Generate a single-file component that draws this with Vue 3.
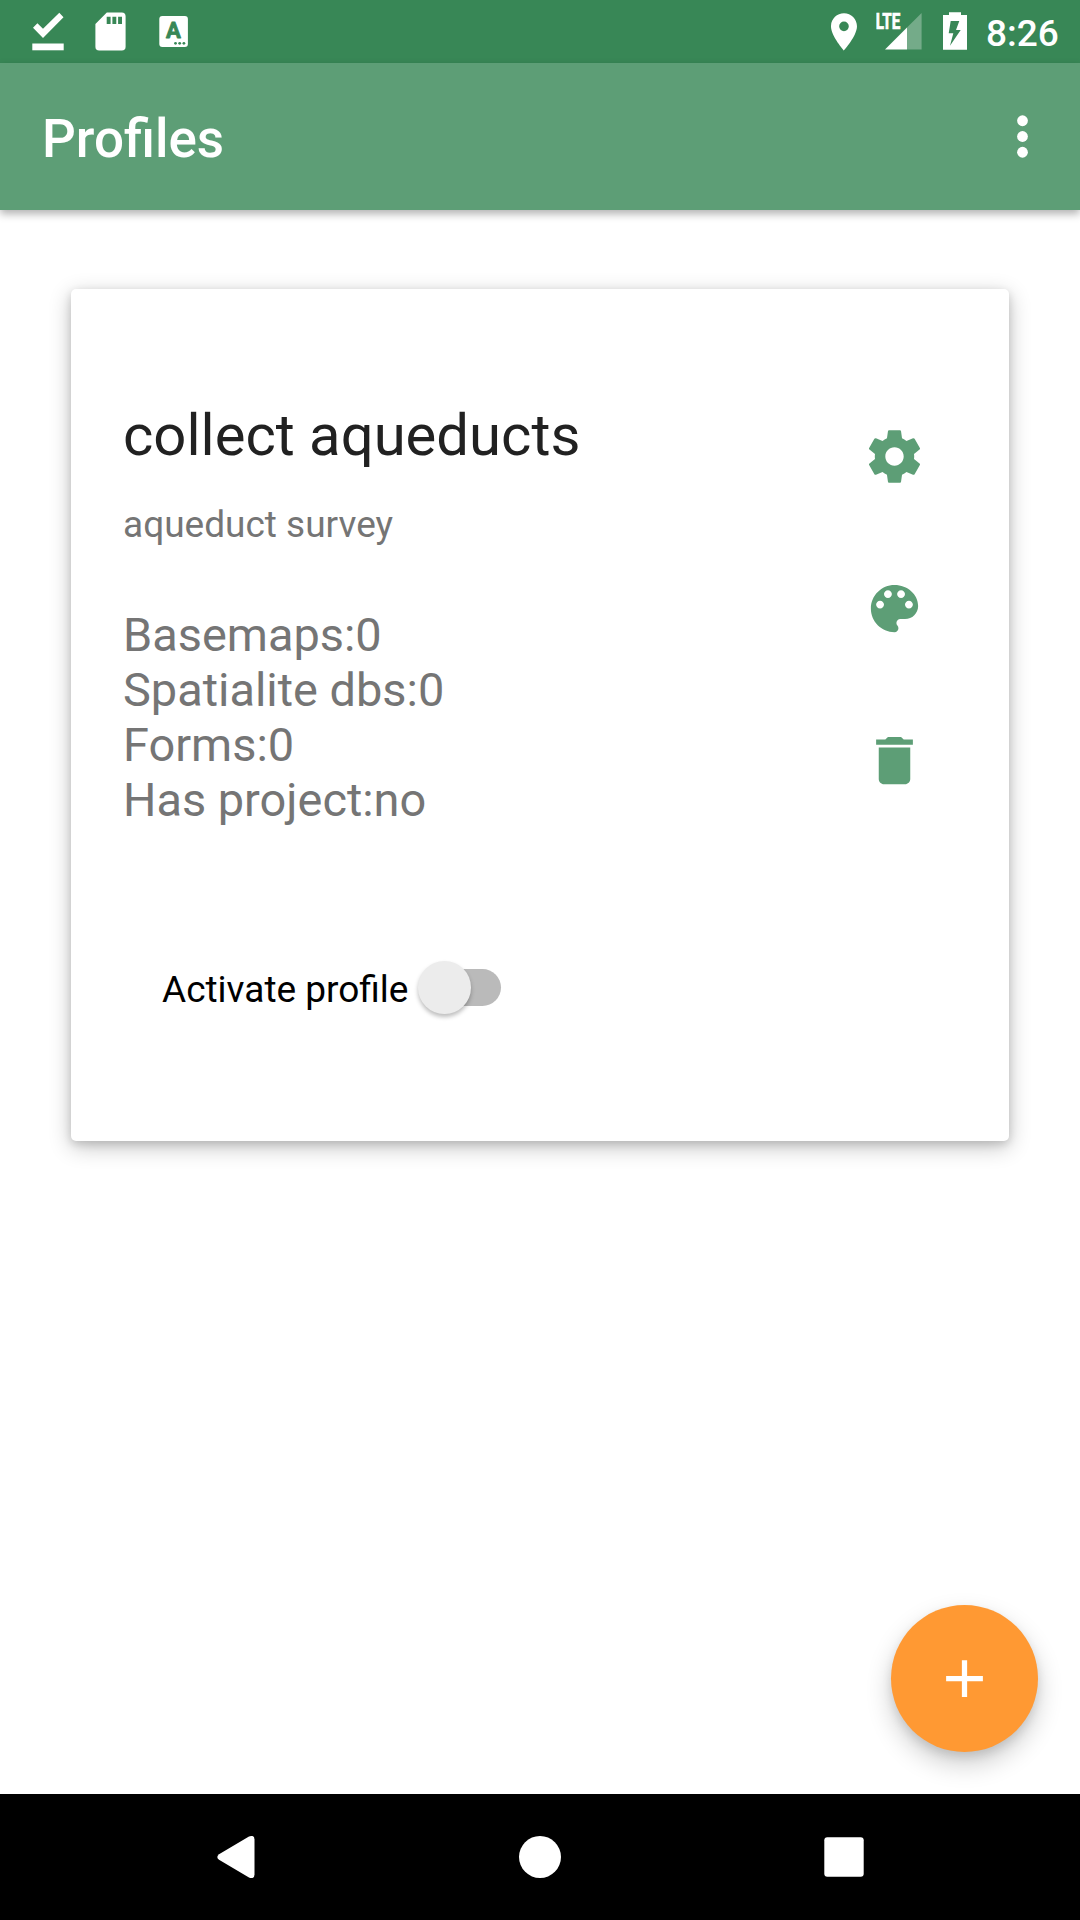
<script setup>
const stats = [
  { label: 'Basemaps', value: '0' },
  { label: 'Spatialite dbs', value: '0' },
  { label: 'Forms', value: '0' },
  { label: 'Has project', value: 'no' },
]

const actions = [
  {
    name: 'settings',
    path: 'M19.43 12.98c.04-.32.07-.64.07-.98s-.03-.66-.07-.98l2.11-1.65c.19-.15.24-.42.12-.64l-2-3.46c-.12-.22-.39-.3-.61-.22l-2.49 1c-.52-.4-1.08-.73-1.69-.98l-.38-2.65C14.46 2.18 14.25 2 14 2h-4c-.25 0-.46.18-.49.42l-.38 2.65c-.61.25-1.17.59-1.69.98l-2.49-1c-.23-.09-.49 0-.61.22l-2 3.46c-.13.22-.07.49.12.64l2.11 1.65c-.04.32-.07.65-.07.98s.03.66.07.98l-2.11 1.65c-.19.15-.24.42-.12.64l2 3.46c.12.22.39.3.61.22l2.49-1c.52.4 1.08.73 1.69.98l.38 2.65c.03.24.24.42.49.42h4c.25 0 .46-.18.49-.42l.38-2.65c.61-.25 1.17-.59 1.69-.98l2.49 1c.23.09.49 0 .61-.22l2-3.46c.12-.22.07-.49-.12-.64l-2.11-1.65zM12 15.5c-1.93 0-3.5-1.57-3.5-3.5s1.57-3.5 3.5-3.5 3.5 1.57 3.5 3.5-1.57 3.5-3.5 3.5z',
  },
  {
    name: 'theme',
    path: 'M12 3c-4.97 0-9 4.03-9 9s4.03 9 9 9c.83 0 1.5-.67 1.5-1.5 0-.39-.15-.74-.39-1.01-.23-.26-.38-.61-.38-.99 0-.83.67-1.5 1.5-1.5H16c2.76 0 5-2.24 5-5 0-4.42-4.03-8-9-8zm-5.5 9c-.83 0-1.5-.67-1.5-1.5S5.67 9 6.5 9 8 9.67 8 10.5 7.33 12 6.5 12zm3-4C8.67 8 8 7.33 8 6.5S8.67 5 9.5 5s1.5.67 1.5 1.5S10.33 8 9.5 8zm5 0c-.83 0-1.5-.67-1.5-1.5S13.67 5 14.5 5s1.5.67 1.5 1.5S15.33 8 14.5 8zm3 4c-.83 0-1.5-.67-1.5-1.5S16.67 9 17.5 9s1.5.67 1.5 1.5-.67 1.5-1.5 1.5z',
  },
  {
    name: 'delete',
    path: 'M6 19c0 1.1.9 2 2 2h8c1.1 0 2-.9 2-2V7H6v12zM19 4h-3.5l-1-1h-5l-1 1H5v2h14V4z',
  },
]
</script>

<template>
  <div class="screen">
    <header class="status-bar">
      <div class="notifications">
        <svg width="32" height="63" viewBox="32 0 32 63" fill="#fff">
          <path d="M33 27.7l4.4-4.5 5.6 5.6 16.3-16 4.2 4.4L43 38z" />
          <path d="M32.3 43.5h31.4v6.8H32.3z" />
        </svg>
        <svg width="32" height="63" viewBox="95 0 32 63">
          <path fill="#fff" fill-rule="evenodd" d="M106.8 12.5h15a3.8 3.8 0 0 1 3.8 3.8v30.4a3.8 3.8 0 0 1-3.8 3.8H99.2a3.8 3.8 0 0 1-3.8-3.8V24zM106.7 16.7v7.4h3.9v-7.4zM112.4 16.7v7.4h3.9v-7.4zM118.1 16.7v7.4h3.9v-7.4z" />
        </svg>
        <svg width="31" height="63" viewBox="158 0 31 63">
          <rect x="159.3" y="16" width="28.6" height="31" rx="3" fill="#fff" />
          <text x="173.4" y="38.4" text-anchor="middle" class="badge-letter">A</text>
          <g fill="#388756">
            <circle cx="175.5" cy="43.3" r="1.4" />
            <circle cx="179.7" cy="43.3" r="1.4" />
            <circle cx="183.9" cy="43.3" r="1.4" />
          </g>
        </svg>
      </div>
      <div class="system">
        <svg width="26" height="63" viewBox="831 0 26 63" fill="#fff">
          <path transform="translate(821.7 9.6) scale(1.857)" fill-rule="evenodd" d="M12 2C8.13 2 5 5.13 5 9c0 5.25 7 13 7 13s7-7.75 7-13c0-3.87-3.13-7-7-7zm0 9.6a2.6 2.6 0 1 1 0-5.2 2.6 2.6 0 0 1 0 5.2z" />
        </svg>
        <svg class="signal" width="46" height="63" viewBox="876 0 46 63" fill="#fff">
          <path opacity=".3" d="M907 27.4L921.6 13v36.6H907z" />
          <path d="M885 49.6l22-22.2v22.2z" />
          <text x="875.8" y="28.7" textLength="24.5" lengthAdjust="spacingAndGlyphs" class="network">LTE</text>
        </svg>
        <svg class="battery" width="24" height="63" viewBox="943 0 24 63">
          <path fill="#fff" fill-rule="evenodd" d="M949 12.3h12V15h6v34.8h-24V15h6zM950.7 21l-2 12.3h4.6L950 45.7 960.7 30H956l3.3-9z" />
        </svg>
        <span class="clock">8:26</span>
      </div>
    </header>

    <div class="app-bar">
      <h1>Profiles</h1>
      <svg width="63" height="63" viewBox="0 0 24 24" fill="#fff">
        <circle cx="12" cy="6" r="2.05" />
        <circle cx="12" cy="12" r="2.05" />
        <circle cx="12" cy="18" r="2.05" />
      </svg>
    </div>

    <main>
      <section class="card">
        <div class="details">
          <h2>collect aqueducts</h2>
          <p class="description">aqueduct survey</p>
          <ul>
            <li v-for="s in stats" :key="s.label">{{ s.label }}:{{ s.value }}</li>
          </ul>
          <label class="activate">
            <span class="activate-label">Activate profile</span>
            <span class="switch"><span class="thumb"></span></span>
          </label>
        </div>
        <div class="actions">
          <svg v-for="a in actions" :key="a.name" width="63" height="63" viewBox="0 0 24 24" fill="#5d9e76">
            <path :d="a.path" />
          </svg>
        </div>
      </section>
      <button class="fab" aria-label="Add profile">
        <svg width="63" height="63" viewBox="0 0 24 24" fill="#fff">
          <path d="M19 13h-6v6h-2v-6H5v-2h6V5h2v6h6z" />
        </svg>
      </button>
    </main>

    <nav class="nav-bar">
      <svg width="38" height="42" viewBox="0 0 38 42" fill="#fff">
        <path d="M32 .6Q37.5-1.6 37.5 3.5v35Q37.5 43.6 32 41.4L2 23.8Q-1.4 21 2 18.2z" />
      </svg>
      <svg width="42" height="42" viewBox="0 0 42 42" fill="#fff"><circle cx="21" cy="21" r="21" /></svg>
      <svg width="40" height="40" viewBox="0 0 40 40" fill="#fff"><rect x=".3" y=".3" width="39.4" height="39.4" rx="3" /></svg>
    </nav>
  </div>
</template>

<style>
body {
  margin: 0;
  background: #fff;
}
</style>

<style scoped>
.screen {
  width: 1080px;
  height: 1920px;
  display: flex;
  flex-direction: column;
  overflow: hidden;
  background: #fff;
  font-family: Roboto, sans-serif;
}
svg {
  display: block;
  flex: none;
}
h1, h2, p, ul {
  margin: 0;
  padding: 0;
  font-weight: 400;
}
.status-bar {
  height: 63px;
  flex: none;
  background: #388756;
  display: flex;
  justify-content: space-between;
  padding-left: 32px;
}
.notifications {
  display: flex;
  gap: 31px;
}
.badge-letter {
  font: 700 22px Roboto, sans-serif;
  fill: #388756;
  stroke: #388756;
  stroke-width: 0.8;
  stroke-linejoin: round;
}
.network {
  font: 700 21.5px Roboto, sans-serif;
  stroke: #fff;
  stroke-width: 0.7;
}
.system {
  display: flex;
  width: 249px;
}
.signal {
  margin-left: 19px;
}
.battery {
  margin-left: 21px;
}
.clock {
  margin-left: 19px;
  color: #fff;
  font-size: 37px;
  font-weight: 500;
  line-height: 68px;
}
.app-bar {
  height: 147px;
  flex: none;
  box-sizing: border-box;
  background: #5d9e76;
  display: flex;
  align-items: center;
  justify-content: space-between;
  padding: 0 26px 0 42px;
  box-shadow: 0 4px 8px rgba(0, 0, 0, 0.3);
  position: relative;
}
h1 {
  color: #fff;
  font-size: 53px;
  font-weight: 500;
  line-height: 62px;
  padding-top: 4px;
}
main {
  flex: 1;
  display: flex;
  flex-direction: column;
  justify-content: space-between;
  padding: 79px 42px 42px 71px;
}
.card {
  width: 938px;
  height: 852px;
  box-sizing: border-box;
  display: flex;
  justify-content: space-between;
  padding: 112px 83px 0 52px;
  border-radius: 5px;
  background: #fff;
  box-shadow: 0 6px 22px rgba(0, 0, 0, 0.24), 0 3px 9px rgba(0, 0, 0, 0.14);
}
h2 {
  color: #212121;
  font-size: 58px;
  line-height: 68px;
}
.description {
  margin-top: 34px;
  color: #757575;
  font-size: 37px;
  line-height: 43px;
}
ul {
  list-style: none;
  margin-top: 61px;
  color: #757575;
  font-size: 46.9px;
  line-height: 55px;
}
.activate {
  display: flex;
  align-items: center;
  margin: 134px 0 0 39px;
  color: #000;
  font-size: 37px;
  line-height: 43px;
}
.activate-label {
  padding-top: 3px;
}
.switch {
  width: 83px;
  height: 53px;
  margin-left: 10px;
  display: grid;
  align-items: center;
}
.switch::before {
  content: '';
  grid-area: 1 / 1;
  justify-self: end;
  width: 70px;
  height: 37px;
  border-radius: 19px;
  background: #bababa;
}
.thumb {
  grid-area: 1 / 1;
  width: 52.5px;
  height: 52.5px;
  border-radius: 50%;
  background: #ececec;
  box-shadow: 0 3px 4px rgba(0, 0, 0, 0.26);
}
.actions {
  padding-top: 24px;
  display: flex;
  flex-direction: column;
  gap: 89px;
}
.fab {
  align-self: flex-end;
  width: 147px;
  height: 147px;
  padding: 0;
  border: 0;
  border-radius: 50%;
  background: #ff9933;
  display: flex;
  align-items: center;
  justify-content: center;
  box-shadow: 0 12px 26px rgba(0, 0, 0, 0.2), 0 5px 10px rgba(0, 0, 0, 0.1);
}
.nav-bar {
  height: 126px;
  flex: none;
  box-sizing: border-box;
  padding: 0 216px 0 217px;
  background: #000;
  display: flex;
  align-items: center;
  justify-content: space-between;
  position: relative;
}
</style>
